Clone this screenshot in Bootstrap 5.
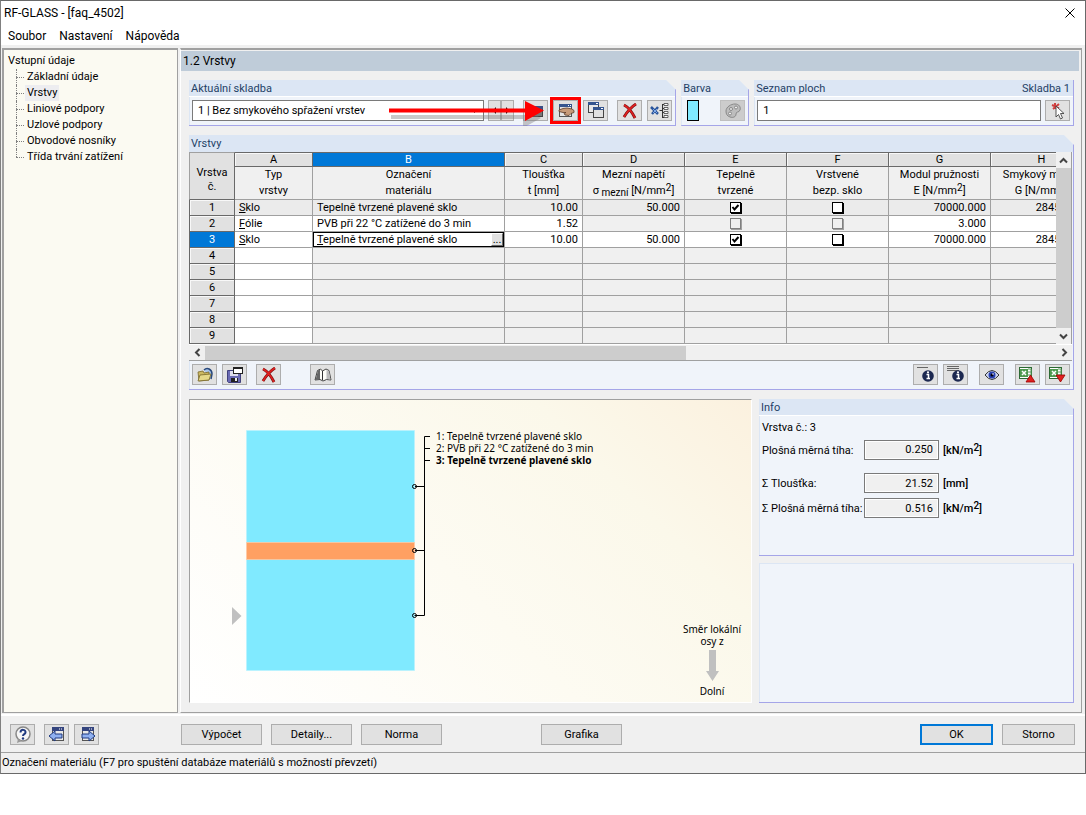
<!DOCTYPE html>
<html lang="cs">
<head>
<meta charset="utf-8">
<meta name="viewport" content="width=device-width, initial-scale=1">
<title>RF-GLASS - [faq_4502]</title>
<link href="https://cdn.jsdelivr.net/npm/bootstrap@5.3.0/dist/css/bootstrap.min.css" rel="stylesheet">
<style>
:root{--face:#f0f0f0;--edge:#a0a0a0;--blue:#0078d7}
body{font:11px/16px Roboto,"Liberation Sans",sans-serif;color:#000;background:#fff}
button,input,select{font:inherit;color:inherit}
.win{background:var(--face);border:1px solid #696969;border-left-color:#808080}
.titlebar{height:24px;font-size:12px;padding:0 8px 0 3px;background:#fff}
.close-btn{border:0;background:none;padding:0;width:14px;height:14px;display:flex}
.menubar{height:20px;background:#fff;gap:13px;padding:2px 0 0 7px;font-size:12px}
.menubar a{color:#000;text-decoration:none}
.work{display:grid;grid-template-columns:176px minmax(0,1fr);column-gap:2px;padding:3px 3px 1px 1px}
.pane{border:1px solid var(--edge);border-top-width:2px}
.tree-pane{background:#fbfaf2;border-left-width:2px;padding:3px 0 0 4px}
.tree-pane a{color:#000;text-decoration:none;padding:0 2px;display:inline-block}
.branch{margin-left:8px}
.branch li{position:relative;padding-left:9px}
.branch li::before{content:"";position:absolute;left:0;top:0;height:16px;border-left:1px dotted #808080}
.branch li:last-child::before{height:8px}
.branch li::after{content:"";position:absolute;left:0;top:8px;width:8px;border-top:1px dotted #808080}
.branch a.here{background:#ededf0}
.main-pane{border-left:1px solid #fff;padding:1px 2px 9px 0}
.page-head{height:20px;background:#bfccd9;font-size:12px;line-height:20px;padding-left:2px}
.page-body{padding:9px 5px 0 8px}
.top-row{margin-bottom:9px}
.grp{position:relative;background:#f0f4fa;border:solid #a5a5e8;border-width:0 1px 1px 0;box-shadow:inset 1px 0 #dce6f4;clip-path:polygon(0 0,calc(100% - 10px) 0,100% 10px,100% 100%,0 100%)}
.grp.plain{clip-path:none}
.grp-head{height:17px;background:#dce6f4;border-bottom:1px solid #fff;color:#1f3f66;padding:1px 3px 0 2px;line-height:15px;display:flex;justify-content:space-between}
.grid-grp .grp-head{border-bottom-color:#dce6f4}
.tools{height:28px;padding:3px 3px 0;display:flex}
.g-main{flex:488 1 0;margin-right:5px;min-width:0}
.g-color{flex:0 0 68px;margin-right:5px}
.g-list{flex:320 1 0;min-width:0}
.box{height:21px;border:1px solid #7a7a7a;background:#fff;border-radius:0;padding:0 5px;min-width:0}
select.box{appearance:none;background:#fff url("data:image/svg+xml,%3Csvg xmlns='http://www.w3.org/2000/svg' width='9' height='6'%3E%3Cpath d='M1 1l3.500 3.500L8 1' fill='none' stroke='%23333'/%3E%3C/svg%3E") no-repeat right 4px center}
.ib{width:25px;height:21px;padding:0;border:1px solid #adadad;background:#e1e1e1;flex:none;display:flex;align-items:center;justify-content:center}
.ib.slim{width:13px}
.ib.off{background:#ccc;border-color:#bfbfbf}
.ib.marked{box-shadow:0 0 0 3px #f00;position:relative}
.near{margin-left:5px}.away{margin-left:9px}.apart{margin-left:11px}.far{margin-left:29px}
.swatch{width:12px;height:21px;border:1px solid #000;background:#80eaff;margin-left:3px}
.pointer{position:absolute;right:126px;top:18px;pointer-events:none}
.grid-wrap{display:grid;grid-template-columns:minmax(0,1fr) 16px;padding-right:1px}
.grid-clip{overflow:hidden;background:var(--face)}
.layers{table-layout:fixed;width:904px;border-collapse:separate;border-spacing:0}
.layers th,.layers td{height:16px;padding:0 4px;line-height:15px;border:0 solid var(--edge);border-width:0 1px 1px 0;font-weight:400;white-space:nowrap;overflow:hidden;background:var(--face)}
.layers thead th{text-align:center;padding:0}
.layers .ltr th{height:15px;line-height:13px;border:1px solid #696969;border-left:0;background:#e1e1e1;box-shadow:inset 1px 1px #f8f8f8}
.layers .ltr th.cur,.layers tbody th.cur{background:var(--blue);color:#fff;box-shadow:none}
.layers .cap th{height:33px;line-height:16px}
.layers th.no,.layers .ltr th.no{border-left:1px solid #696969;border-right-color:#696969;text-align:center;background:#e1e1e1}
.layers .ltr th.no{line-height:14px;padding-top:8px;box-shadow:none;border-top-color:var(--edge);border-left-color:var(--edge)}
.layers tbody th{border-color:#696969;box-shadow:inset 1px 1px #f8f8f8}
.layers tbody th.no.cur{background:var(--blue)}
.layers .w{background:#fff}
.layers .r1 td{background:#ebebeb}
.layers .n{text-align:right}
.layers .c{text-align:center}
.layers sub,.layers sup,.unit sup{font-size:10px;line-height:0;position:static}
.layers sub{vertical-align:-2px}
.layers sup,.unit sup{vertical-align:3px}
.layers td.edit{position:relative;box-shadow:inset 0 0 0 1px #000;background:#fff}
.dots{position:absolute;right:1px;top:1px;width:12px;height:13px;padding:0;line-height:8px;border:1px solid;border-color:#fff #696969 #696969 #fff;background:#e1e1e1}
.tick{appearance:none;width:11px;height:11px;margin:0 0 2px;border:1px solid #000;background:#fff;box-shadow:1px 1px #000;vertical-align:middle;display:inline-block}
.tick:disabled{border-color:#808080;box-shadow:1px 1px #a0a0a0;background:#f0f0f0}
.tick:checked{background:#fff url("data:image/svg+xml,%3Csvg xmlns='http://www.w3.org/2000/svg' width='9' height='9'%3E%3Cpath d='M1.500 4l2 2.500L7.500 2' fill='none' stroke='%23000' stroke-width='2'/%3E%3C/svg%3E") center no-repeat}
.vbar{display:flex;flex-direction:column;align-items:center;background:var(--face);border-right:1px solid var(--edge)}
.vbar .thumb{flex:1;width:100%;background:#cdcdcd}
.hbar{display:flex;align-items:center;height:17px;background:var(--face);border-top:1px solid #fff;border-bottom:1px solid var(--edge);margin-right:1px}
.hbar .track{flex:1;height:14px}
.hbar .thumb{width:56.500%;height:100%;background:#cdcdcd}
.sb{border:0;background:none;padding:0;width:16px;height:16px;display:flex;align-items:center;justify-content:center}
.lower{display:grid;grid-template-columns:minmax(0,563fr) minmax(0,315fr);column-gap:7px;margin-top:9px}
.view{position:relative;border:1px solid var(--edge);border-right-color:#fff;border-bottom-color:#fff;background:linear-gradient(45deg,#fff 0%,#fdfbf2 45%,#fbf8ea 75%,#fbf1df 100%);min-height:304px}
.view,.view text{font-family:"Noto Sans","Liberation Sans",sans-serif;font-size:10px}
.axis{position:absolute;right:8px;bottom:5px;width:62px;text-align:center;line-height:12px}
.axis svg{margin:3px auto}
.info{height:157px;margin-bottom:7px}
.spare{height:140px;border-top:1px solid #dce6f4}
.facts{display:grid;grid-template-columns:98px 75px auto;grid-template-rows:16px 27px 7px 26px 24px;column-gap:4px;align-items:center;padding:4px 0 0 3px}
.facts .wide{grid-column:1/4}
.facts label{white-space:nowrap}
.facts label,.unit{padding-top:2px}
.facts .box{background:var(--face);text-align:right;height:20px;width:75px;box-shadow:inset 0 0 0 1px #fff}
.unit{font-weight:500}
.foot{height:38px;border-top:2px solid #fff;padding:8px 10px 0 9px;display:flex;align-items:flex-start}
.pb{width:81px;height:21px;padding:0;border:1px solid #adadad;background:#e1e1e1;margin-right:9px;line-height:19px}
.pb.short{width:73px}
.pb.def{border:2px solid var(--blue);line-height:17px}
.pb.first{margin-left:82px}
.pb.mid{margin-left:90px}
.status{height:21px;border-top:1px solid var(--edge);line-height:19px;padding-left:1px}
</style>
</head>
<body>
<div class="win">
  <header class="titlebar d-flex align-items-center justify-content-between">
    <span>RF-GLASS - [faq_4502]</span>
    <button class="close-btn" aria-label="Zavřít"><svg width="14" height="14"><path d="M2.500 2.500l9 9m0-9l-9 9" stroke="#000" fill="none"/></svg></button>
  </header>
  <nav class="menubar d-flex align-items-center"><a href="#">Soubor</a><a href="#">Nastavení</a><a href="#">Nápověda</a></nav>

  <div class="work">
    <aside class="pane tree-pane">
      <ul class="list-unstyled m-0"><li><a href="#" class="p-0">Vstupní údaje</a>
        <ul class="list-unstyled branch mb-0">
          <li><a href="#">Základní údaje</a></li>
          <li><a href="#" class="here">Vrstvy</a></li>
          <li><a href="#">Liniové podpory</a></li>
          <li><a href="#">Uzlové podpory</a></li>
          <li><a href="#">Obvodové nosníky</a></li>
          <li><a href="#">Třída trvání zatížení</a></li>
        </ul></li></ul>
    </aside>

    <main class="pane main-pane">
      <div class="page-head">1.2 Vrstvy</div>
      <div class="page-body">
        <div class="top-row d-flex">
          <section class="grp g-main">
            <div class="grp-head"><label for="combo">Aktuální skladba</label></div>
            <div class="tools">
              <select id="combo" class="box flex-fill"><option>1 | Bez smykového spřažení vrstev</option></select>
              <button class="ib slim ms-1" aria-label="Předchozí"><svg width="9" height="9"><path d="M6 1L3 4.500 6 8z"/></svg></button>
              <button class="ib slim" aria-label="Další"><svg width="9" height="9"><path d="M3 1l3 3.500L3 8z"/></svg></button>
              <button class="ib away" aria-label="Nová skladba"><svg width="18" height="16"><rect x="3.500" y="3.500" width="12" height="10" fill="#777" stroke="#444"/><rect x="3" y="3" width="13" height="3" fill="#3a4f86"/></svg></button>
              <button class="ib marked near" aria-label="Upravit skladbu"><svg width="20" height="17"><rect x="3.500" y="2.500" width="12" height="12" fill="#e4e4e4" stroke="#555"/><rect x="3" y="2" width="13" height="3" fill="#35558f"/><path d="M12 3.500h1m1 0h1" stroke="#fff"/><path d="M3 8l4-1.500 4-.500 5 1 2 1.500v2l-3 1-2 2-4-.500-1-1.500 2-1H7L3 9.500z" fill="#c69a78" stroke="#5b3b2a" stroke-width=".8"/></svg></button>
              <button class="ib near" aria-label="Kopírovat skladbu"><svg width="20" height="19"><rect x="2.500" y="2.500" width="10" height="9" fill="#e8e8e8" stroke="#444"/><rect x="2" y="1" width="11" height="3" fill="#35558f"/><rect x="7.500" y="7.500" width="10" height="9" fill="#e0e0e0" stroke="#444"/><rect x="7" y="6" width="11" height="3" fill="#35558f"/><path d="M10 2.500h2m3 5h2" stroke="#fff"/></svg></button>
              <button class="ib away" aria-label="Smazat skladbu"><svg width="16" height="16"><use href="#del"/></svg></button>
              <button class="ib near" aria-label="Smazat nepoužité"><svg width="19" height="17"><path d="M1 5l7 7M8 5l-6 7" stroke="#2a559c" stroke-width="2.500"/><path d="M3 7l4 4m0-4l-4 4" stroke="#7fa8e8"/><path d="M9.500 8.500h3m0-6.500v13.500M12 2.500h2m-2 4h2m-2 4h2m-2 5h2" stroke="#333" fill="none"/><path d="M14 1.500h4v2h-4zm0 4h4v2h-4zm0 4h4v2h-4zm0 4h4v2h-4z" fill="#fff" stroke="#444" stroke-width=".8"/></svg></button>
              <svg class="pointer" width="164" height="32"><path d="M6 17h136v-5l14 8-18 10v-9H6z" fill="#777" opacity=".4"/><path d="M4 10.500h136V3l19 9.500L140 23v-8.500H4z" fill="#f00"/></svg>
            </div>
          </section>
          <section class="grp g-color">
            <div class="grp-head">Barva</div>
            <div class="tools justify-content-between"><span class="swatch"></span>
              <button class="ib off" disabled aria-label="Paleta"><svg width="18" height="17"><path d="M2 9c0-4 5-7 9-7s6 3 5 6-4 1-4 4-3 4-6 3-4-3-4-6z" fill="#bdbdbd" stroke="#888"/><circle cx="7" cy="7" r="1.500" fill="#eee" stroke="#888"/><circle cx="12" cy="5.500" r="1.500" fill="#eee" stroke="#888"/><circle cx="6" cy="11.500" r="1.500" fill="#eee" stroke="#888"/></svg></button></div>
          </section>
          <section class="grp g-list plain">
            <div class="grp-head"><label for="areas">Seznam ploch</label><span>Skladba 1</span></div>
            <div class="tools gap-1"><input id="areas" class="box flex-fill" value="1">
              <button class="ib" aria-label="Vybrat plochy"><svg width="18" height="18"><path d="M3 3l7 3M10 2L4 7M6 1v6" stroke="#d04040" stroke-width="2"/><path d="M7 4v11l2.500-2.500 2 4.500 2-1-2-4.500H15z" fill="#fff" stroke="#444" stroke-width=".9"/></svg></button></div>
          </section>
        </div>

        <section class="grp grid-grp">
          <div class="grp-head">Vrstvy</div>
          <div class="grid-wrap">
            <div class="grid-clip">
              <table class="layers">
                <colgroup><col style="width:46px"><col style="width:78px"><col style="width:192px"><col style="width:78px"><col style="width:102px"><col style="width:102px"><col style="width:102px"><col style="width:102px"><col style="width:102px"></colgroup>
                <thead>
                  <tr class="ltr"><th class="no" rowspan="2">Vrstva<br>č.</th><th>A</th><th class="cur">B</th><th>C</th><th>D</th><th>E</th><th>F</th><th>G</th><th>H</th></tr>
                  <tr class="cap"><th>Typ<br>vrstvy</th><th>Označení<br>materiálu</th><th>Tloušťka<br>t [mm]</th><th>Mezní napětí<br>σ<sub> mezní</sub> [N/mm<sup>2</sup>]</th><th>Tepelně<br>tvrzené</th><th>Vrstvené<br>bezp. sklo</th><th>Modul pružnosti<br>E [N/mm<sup>2</sup>]</th><th>Smykový modul<br>G [N/mm<sup>2</sup>]</th></tr>
                </thead>
                <tbody>
                  <tr class="r1"><th class="no">1</th><td><u>S</u>klo</td><td>Tepelně tvrzené plavené sklo</td><td class="n">10.00</td><td class="n">50.000</td><td class="c"><input type="checkbox" class="tick" aria-label="Tepelně tvrzené 1" checked></td><td class="c"><input type="checkbox" class="tick" aria-label="Vrstvené 1"></td><td class="n">70000.000</td><td class="n">28455.285</td></tr>
                  <tr><th class="no">2</th><td class="w"><u>F</u>ólie</td><td class="w">PVB při 22 °C zatížené do 3 min</td><td class="n w">1.52</td><td></td><td class="c"><input type="checkbox" class="tick" aria-label="Tepelně tvrzené 2" disabled></td><td class="c"><input type="checkbox" class="tick" aria-label="Vrstvené 2" disabled></td><td class="n w">3.000</td><td class="w"></td></tr>
                  <tr><th class="no cur">3</th><td class="w"><u>S</u>klo</td><td class="edit"><u>T</u>epelně tvrzené plavené sklo<button class="dots" aria-label="Databáze materiálů">...</button></td><td class="n w">10.00</td><td class="n w">50.000</td><td class="c w"><input type="checkbox" class="tick" aria-label="Tepelně tvrzené 3" checked></td><td class="c w"><input type="checkbox" class="tick" aria-label="Vrstvené 3"></td><td class="n w">70000.000</td><td class="n w">28455.285</td></tr>
                  <tr><th class="no">4</th><td class="w"></td><td></td><td></td><td></td><td></td><td></td><td></td><td></td></tr>
                  <tr><th class="no">5</th><td class="w"></td><td></td><td></td><td></td><td></td><td></td><td></td><td></td></tr>
                  <tr><th class="no">6</th><td class="w"></td><td></td><td></td><td></td><td></td><td></td><td></td><td></td></tr>
                  <tr><th class="no">7</th><td class="w"></td><td></td><td></td><td></td><td></td><td></td><td></td><td></td></tr>
                  <tr><th class="no">8</th><td class="w"></td><td></td><td></td><td></td><td></td><td></td><td></td><td></td></tr>
                  <tr><th class="no">9</th><td class="w"></td><td></td><td></td><td></td><td></td><td></td><td></td><td></td></tr>
                </tbody>
              </table>
            </div>
            <div class="vbar">
              <button class="sb" aria-label="Nahoru"><svg width="9" height="7"><path d="M1 5.500L4.500 2 8 5.500" fill="none" stroke="#444" stroke-width="2"/></svg></button>
              <span class="thumb"></span>
              <button class="sb" aria-label="Dolů"><svg width="9" height="7"><path d="M1 1.500L4.500 5 8 1.500" fill="none" stroke="#444" stroke-width="2"/></svg></button>
            </div>
          </div>
          <div class="hbar">
            <button class="sb" aria-label="Doleva"><svg width="7" height="9"><path d="M5.500 1L2 4.500 5.500 8" fill="none" stroke="#444" stroke-width="2"/></svg></button>
            <div class="track"><div class="thumb"></div></div>
            <button class="sb" aria-label="Doprava"><svg width="7" height="9"><path d="M1.500 1L5 4.500 1.500 8" fill="none" stroke="#444" stroke-width="2"/></svg></button>
          </div>
          <div class="tools">
            <button class="ib" aria-label="Otevřít"><svg width="18" height="16"><path d="M8 3c3-3 8-1 8 4l-1 5" fill="#a8c4ea" stroke="#28487c" stroke-width="1.500"/><path d="M2 5l5-1 1 2 5-1v8l-10 1z" fill="#cdb860" stroke="#77672a" stroke-width=".8"/><path d="M2 14l2-6 11-1-2 6z" fill="#e6d888" stroke="#77672a" stroke-width=".8"/></svg></button>
            <button class="ib near" aria-label="Uložit"><svg width="18" height="18"><path d="M1.500 4.500h13v12h-12l-1-1z" fill="#6a6ab4" stroke="#40407c"/><path d="M4 5h8v5H4z" fill="#dde"/><path d="M5 12h7v4H5z" fill="#222"/><path d="M9 12h2v3H9z" fill="#eee"/><rect x="7.500" y="1.500" width="9" height="6" fill="#fff" stroke="#222"/><path d="M7 2h10" stroke="#222" stroke-width="2"/></svg></button>
            <button class="ib away" aria-label="Smazat"><svg width="16" height="16"><use href="#del"/></svg></button>
            <button class="ib far" aria-label="Databáze"><svg width="18" height="14"><path d="M1 12L3.500 2.500 6.500 1 8.500 3 12 1l3 1.500L17 12l-4.500-.500L9 13l-3-1.500z" fill="#fdfdf8" stroke="#444"/><path d="M1.500 12L4 2.500l2-1L6 11z" fill="#666"/><path d="M12.500 2L15 3l1.500 8.500-4-.5z" fill="#bbb"/><path d="M8.500 3v9" stroke="#333"/></svg></button>
            <span class="flex-fill"></span>
            <button class="ib" aria-label="Info o vrstvě"><svg width="20" height="19"><path d="M1 2.500h11" stroke="#666"/><use href="#inf"/></svg></button>
            <button class="ib near" aria-label="Info o skladbě"><svg width="20" height="19"><path d="M1 1.500h12M1 3.500h12M1 5.500h12" stroke="#666"/><use href="#inf"/></svg></button>
            <button class="ib apart" aria-label="Zobrazit"><svg width="16" height="12"><path d="M1 6q7-9 14 0-7 9-14 0z" fill="#cfd8f4" stroke="#333"/><circle cx="8" cy="6" r="3.500" fill="#2740b0"/><circle cx="8" cy="6" r="1.500" fill="#001"/><circle cx="9" cy="5" r=".8" fill="#fff"/></svg></button>
            <button class="ib apart" aria-label="Export do Excelu"><svg width="19" height="18"><use href="#xls"/><path d="M8 16l4.500-7 4.500 7z" fill="#e02020" stroke="#900" stroke-width=".8"/></svg></button>
            <button class="ib near" aria-label="Import z Excelu"><svg width="19" height="18"><use href="#xls"/><path d="M8 9h9l-4.500 7z" fill="#e02020" stroke="#900" stroke-width=".8"/></svg></button>
          </div>
        </section>

        <div class="lower">
          <div class="view">
            <svg width="420" height="290" class="d-block">
              <g stroke-opacity=".6"><rect x="56.500" y="30.500" width="168" height="112" fill="#80eaff" stroke="#b8f2ff"/><rect x="56.500" y="159.500" width="168" height="111" fill="#80eaff" stroke="#b8f2ff"/><rect x="56.500" y="142.500" width="168" height="17" fill="#ffa062" stroke="#ffc8a0"/></g>
              <path d="M42 207l9.500 9-9.500 9z" fill="#c0c0c0"/>
              <path d="M240 36.500h-5.500v179h-10M235 48.500h5M235 60.500h5M225 86.500h9M225 150.500h9" fill="none" stroke="#000"/>
              <g fill="none" stroke="#000"><circle cx="224.500" cy="86.500" r="2"/><circle cx="224.500" cy="150.500" r="2"/><circle cx="224.500" cy="215.500" r="2"/></g>
              <text x="246" y="40">1: Tepelně tvrzené plavené sklo</text>
              <text x="246" y="52">2: PVB při 22 °C zatížené do 3 min</text>
              <text x="246" y="64" font-weight="700">3: Tepelně tvrzené plavené sklo</text>
            </svg>
            <div class="axis">Směr lokální<br>osy z
              <svg width="14" height="32" class="d-block"><path d="M4 0h7v21h3L7.500 31 1 21h3z" fill="#c0c0c0"/></svg>Dolní</div>
          </div>
          <div>
            <section class="grp info">
              <div class="grp-head">Info</div>
              <div class="facts">
                <span class="wide">Vrstva č.: 3</span>
                <label for="f1">Plošná měrná tíha:</label><input id="f1" class="box" readonly value="0.250"><span class="unit">[kN/m<sup>2</sup>]</span>
                <span class="wide"></span>
                <label for="f2">Σ Tloušťka:</label><input id="f2" class="box" readonly value="21.52"><span class="unit">[mm]</span>
                <label for="f3">Σ Plošná měrná tíha:</label><input id="f3" class="box" readonly value="0.516"><span class="unit">[kN/m<sup>2</sup>]</span>
              </div>
            </section>
            <section class="grp plain spare"></section>
          </div>
        </div>
      </div>
    </main>
  </div>

  <div class="foot">
    <button class="ib" aria-label="Nápověda"><svg width="18" height="18"><circle cx="9" cy="8" r="7" fill="#f6f6f6" stroke="#888" stroke-width="1.500"/><path d="M4 13l-1 4 5-2z" fill="#999"/><path d="M6.500 6.500c0-4 5.500-3 5 0-.3 1.800-2.500 1.500-2.500 3.500" stroke="#203a80" stroke-width="2" fill="none"/><circle cx="9" cy="12.500" r="1.200" fill="#203a80"/></svg></button>
    <button class="ib away" aria-label="Zpět"><svg width="18" height="18"><use href="#pg"/><path d="M1 10l6-5v3h7v4H7v3z" fill="#8fb0f0" stroke="#203a80"/></svg></button>
    <button class="ib near" aria-label="Vpřed"><svg width="18" height="18"><use href="#pg"/><path d="M17 10l-6-5v3H4v4h7v3z" fill="#8fb0f0" stroke="#203a80"/></svg></button>
    <button class="pb first">Výpočet</button><button class="pb">Detaily...</button><button class="pb">Norma</button>
    <button class="pb mid">Grafika</button>
    <button class="pb short def ms-auto">OK</button><button class="pb short me-0">Storno</button>
  </div>
  <footer class="status">Označení materiálu (F7 pro spuštění databáze materiálů s možností převzetí)</footer>
</div>

<svg width="0" height="0" class="position-absolute" aria-hidden="true"><defs>
  <g id="del"><path d="M2 2c4 2 8 7 11 13M14 1C9 4 5 9 2 14" fill="none" stroke="#7a1010" stroke-width="2.800"/><path d="M2 2c4 2 8 7 11 13M14 1C9 4 5 9 2 14" fill="none" stroke="#e02020" stroke-width="1.500"/></g>
  <g id="inf"><circle cx="12" cy="11" r="5.800" fill="#1c2850"/><path d="M10.500 9.500h2v4h1.500m-3.500 0h3" stroke="#fff" stroke-width="1.500" fill="none"/><circle cx="12" cy="7.300" r="1.100" fill="#fff"/></g>
  <g id="xls"><rect x="1.500" y="1.500" width="12" height="11" fill="#fff" stroke="#2d6a35"/><path d="M10 3h3v9h-3M10 6h3m-3 3h3" stroke="#5a9a5a" fill="none"/><rect x="2" y="3" width="8" height="8" fill="#4f9a50"/><path d="M4 5l4 4m0-4L4 9" stroke="#fff" stroke-width="1.500"/></g>
  <g id="pg"><rect x="4.500" y="2.500" width="11" height="12" fill="#e8e8e8" stroke="#555"/><rect x="4" y="1" width="12" height="4" fill="#35457f"/><path d="M11 3h1m1 0h1" stroke="#fff"/></g>
</defs></svg>
<script src="https://cdn.jsdelivr.net/npm/bootstrap@5.3.0/dist/js/bootstrap.bundle.min.js"></script>
</body>
</html>
